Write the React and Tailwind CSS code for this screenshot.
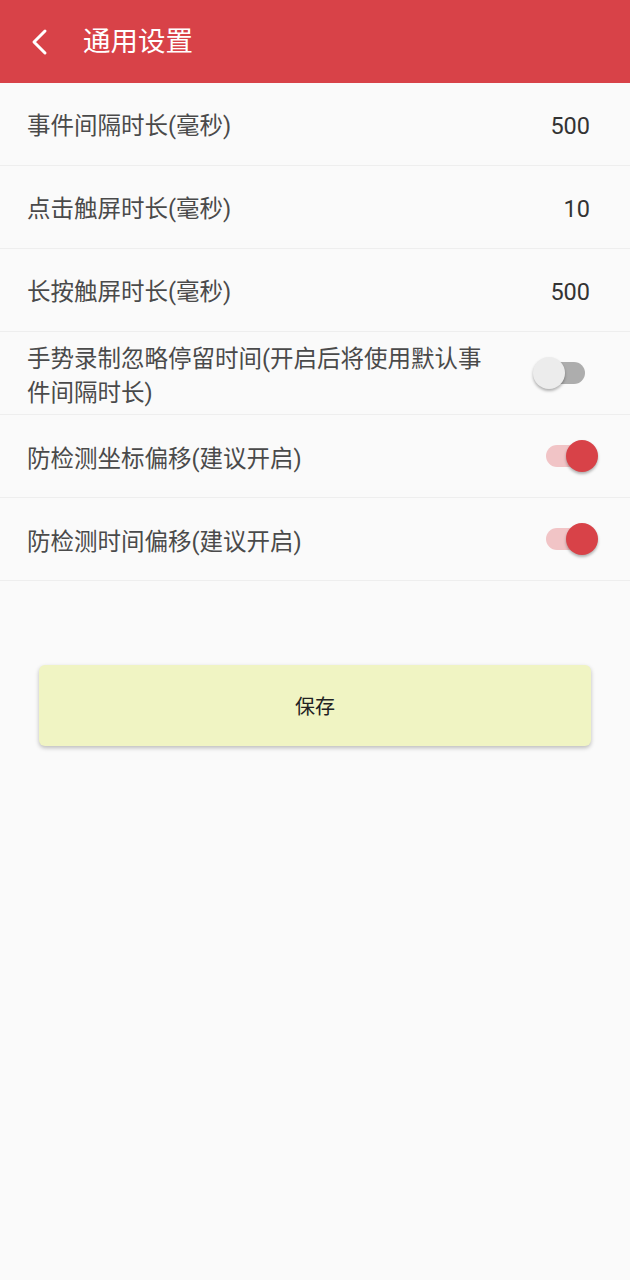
import React, { useState } from 'react';

const font = { fontFamily: 'Roboto, "Noto Sans CJK SC", "Noto Sans", sans-serif' };

function Toggle({ on, onChange }) {
  return (
    <button onClick={onChange} className="relative w-[65px] h-[36px] shrink-0">
      <span className={`absolute left-[13px] top-[7px] w-[39px] h-[22px] rounded-full ${on ? 'bg-[#f1c4c6]' : 'bg-[#adadad]'}`} />
      <span
        className={`absolute top-[2px] w-[32px] h-[32px] rounded-full shadow-[0_2px_3px_rgba(0,0,0,0.3)] ${on ? 'left-[33px] bg-[#d84248]' : 'left-0 bg-[#ececec]'}`}
      />
    </button>
  );
}

export default function App() {
  const [settings, setSettings] = useState({ gesture: false, coord: true, time: true });

  const flip = (k) => setSettings((s) => ({ ...s, [k]: !s[k] }));

  const numRows = [
    { label: '事件间隔时长(毫秒)', value: '500' },
    { label: '点击触屏时长(毫秒)', value: '10' },
    { label: '长按触屏时长(毫秒)', value: '500' },
  ];

  const switchRows = [
    { key: 'gesture', label: '手势录制忽略停留时间(开启后将使用默认事件间隔时长)' },
    { key: 'coord', label: '防检测坐标偏移(建议开启)' },
    { key: 'time', label: '防检测时间偏移(建议开启)' },
  ];

  return (
    <div className="min-h-screen bg-[#fafafa]" style={font}>
      <header className="h-[83px] bg-[#d84248] flex items-center text-white">
        <button className="w-[83px] h-full flex items-center pl-[30px]">
          <svg width="20" height="28" viewBox="0 0 20 28" fill="none">
            <path d="M15 3 L4 14 L15 25" stroke="white" strokeWidth="3" strokeLinecap="round" strokeLinejoin="round" />
          </svg>
        </button>
        <h1 className="text-[27.5px] leading-none">通用设置</h1>
      </header>

      <div>
        {numRows.map((r) => (
          <div key={r.label} className="h-[83px] flex items-center justify-between pl-[27px] pr-[40px] pt-[5px] border-b border-[#eeeeee]">
            <span className="text-[23.5px] text-[#4a4a4a]">{r.label}</span>
            <span className="text-[23.5px] text-[#333333]">{r.value}</span>
          </div>
        ))}
        {switchRows.map((r) => (
          <div key={r.key} className="h-[83px] flex items-center justify-between pl-[27px] pr-[32px] border-b border-[#eeeeee]">
            <span className="text-[23.5px] leading-[34px] text-[#4a4a4a] w-[470px] pt-[5px]">{r.label}</span>
            <Toggle on={settings[r.key]} onChange={() => flip(r.key)} />
          </div>
        ))}
      </div>

      <div className="px-[39px] pt-[84px]">
        <button className="w-full h-[81px] rounded-[6px] bg-[#f0f4c3] shadow-[0_2px_4px_rgba(0,0,0,0.25)] text-[20px] text-[#222222] pt-[3px]">
          保存
        </button>
      </div>
    </div>
  );
}
